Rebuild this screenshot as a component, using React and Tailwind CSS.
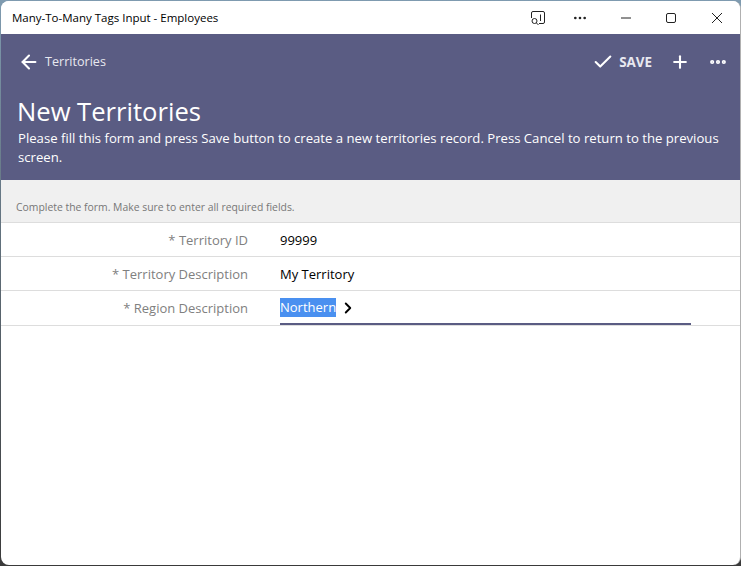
import { ArrowLeft, Check, ChevronRight, Ellipsis, Plus } from "lucide-react";

const filas = [
  { etiqueta: "Territory ID", valor: "99999", alto: "h-[34px] pt-[2px]" },
  { etiqueta: "Territory Description", valor: "My Territory", alto: "h-[34px] pt-[2px]" },
  { etiqueta: "Region Description", valor: "Northern", alto: "h-[35px] pt-[1px]", activa: true },
];

function BarraTitulo() {
  return (
    <div className="flex h-[33px] shrink-0 items-center bg-white pl-[11px] text-black">
      <span className="flex-1 text-[11.5px]">Many-To-Many Tags Input - Employees</span>
      <div className="-mr-[1px] flex items-center">
        <div className="flex w-[46px] justify-center pl-[7px]">
          <svg width="16" height="16" viewBox="0 0 16 16" fill="none" stroke="#222" strokeWidth="1">
            <path d="M1.500 8V3A1.500 1.500 0 0 1 3 1.500h10A1.500 1.500 0 0 1 14.500 3v9a1.500 1.500 0 0 1-1.500 1.500h-4" />
            <path d="M10.500 4.500v6.500" />
            <circle cx="4.500" cy="11" r="2.500" />
            <path d="M6.500 13l2 2" />
          </svg>
        </div>
        <div className="flex w-[46px] justify-center">
          <Ellipsis size={16} strokeWidth={2} className="text-[#222]" />
        </div>
        <div className="flex w-[46px] justify-center">
          <svg width="10" height="10" viewBox="0 0 10 10" stroke="#222" strokeWidth="1">
            <path d="M0 5h10" />
          </svg>
        </div>
        <div className="flex w-[46px] justify-center pr-[2px]">
          <div className="h-[10px] w-[10px] rounded-[2px] border border-[#222]" />
        </div>
        <div className="flex w-[46px] justify-center pr-[2px]">
          <svg width="10" height="10" viewBox="0 0 10 10" stroke="#222" strokeWidth="1">
            <path d="M0 0l10 10M10 0L0 10" />
          </svg>
        </div>
      </div>
    </div>
  );
}

function Cabecera() {
  return (
    <header className="h-[146px] shrink-0 bg-[#5a5c83] pl-[17px] text-white">
      <div className="flex h-[56px] items-center pr-[12px]">
        <ArrowLeft size={22} strokeWidth={2.250} className="text-white" />
        <span className="ml-[5px] flex-1 text-[12.600px] text-[#e8e8f0]">Territories</span>
        <Check size={22} strokeWidth={2.250} className="-ml-[2px]" />
        <span className="ml-[5px] text-[13.400px] font-bold text-[#e8e8f0]">SAVE</span>
        <Plus size={20} strokeWidth={2.500} className="ml-[18px]" />
        <Ellipsis size={20} strokeWidth={3} className="ml-[18px]" />
      </div>
      <h1 className="-ml-[1px] mt-[4px] text-[25.600px] leading-[36px]">New Territories</h1>
      <p className="-mt-[1px] pr-[14px] text-[13.150px] leading-[19px]">
        Please fill this form and press Save button to create a new territories record. Press Cancel to return to the previous screen.
      </p>
    </header>
  );
}

export default function App() {
  return (
    <div className="h-[566px] w-[741px] bg-linear-to-b from-[#7f9bb0] to-[#3a3a3a] pl-[1px] pt-[1px]">
      <div
        className="flex h-[564px] w-[740px] flex-col overflow-hidden rounded-[8px] border-r border-[#b0b0b0] bg-white"
        style={{ fontFamily: '"Open Sans", sans-serif' }}
      >
        <BarraTitulo />
        <Cabecera />
        <div className="flex h-[43px] shrink-0 items-end border-b border-[#ddd] bg-[#f0f0f0] pb-[6px] pl-[15px] text-[10.400px] text-[#777]">
          Complete the form. Make sure to enter all required fields.
        </div>
        {filas.map((fila) => (
          <div key={fila.etiqueta} className={`flex shrink-0 items-center border-b border-[#ddd] ${fila.alto}`}>
            <div className="w-[247px] text-right text-[13px] text-[#808080]">* {fila.etiqueta}</div>
            <div
              className={`ml-[32px] flex h-full w-[411px] items-center text-[13px] text-black ${
                fila.activa ? "border-b-2 border-[#5a5c83]" : ""
              }`}
            >
              <span className={fila.activa ? "bg-[#4a90f0] text-white" : ""}>{fila.valor}</span>
              {fila.activa && <ChevronRight size={18} strokeWidth={2.500} className="ml-[3px]" />}
            </div>
          </div>
        ))}
      </div>
    </div>
  );
}
